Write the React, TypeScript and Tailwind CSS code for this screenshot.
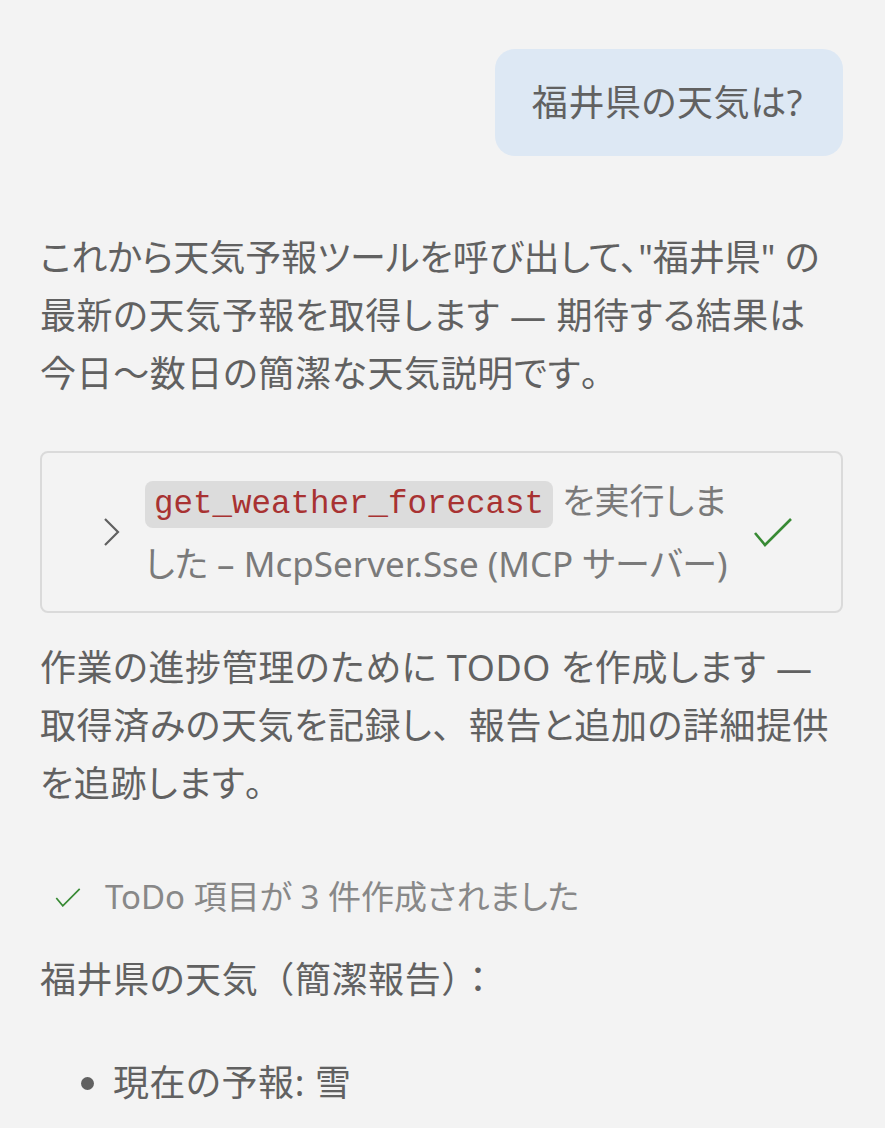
import React from "react";

const font = {
  fontFamily: '"Noto Sans", "Noto Sans CJK JP", sans-serif',
};

// 全角の約物はプロポーショナル詰めしない
const P = ({ children }: { children: React.ReactNode }) => (
  <span className="[font-feature-settings:normal]">{children}</span>
);

const ChevronRight = () => (
  <svg width="18" height="30" viewBox="0 0 18 30" fill="none">
    <path d="M2 2 L15 15 L2 28" stroke="#616161" strokeWidth="2.2" />
  </svg>
);

const Check = ({ size = 40 }: { size?: number }) => (
  <svg width={size} height={size * 0.8} viewBox="0 0 40 32" fill="none">
    <path d="M2 17 L12 29 L38 3" stroke="#388a34" strokeWidth="2.6" />
  </svg>
);

const App: React.FC = () => {
  return (
    <div
      className="min-h-screen bg-[#f3f3f3] pl-[40px] pr-[42px] pt-[49px] text-[#616161] text-[36px] tracking-[0.6px] [font-feature-settings:'palt']"
      style={font}
    >
      {/* ユーザーの質問 */}
      <div className="flex justify-end">
        <div className="flex h-[107px] items-center rounded-[20px] bg-[#dde8f4] pl-[37px] pr-[40px]">
          福井県の天気は?
        </div>
      </div>

      <p className="mt-[73px] leading-[58px]">
        <span className="tracking-normal">これから天気予報ツールを呼び出して、"福井県" の</span>
        <br />
        最新の天気予報を取得します — 期待する結果は<br />
        今日<P>～</P>数日の簡潔な天気説明です<P>。</P>
      </p>

      {/* ツール呼び出し */}
      <div className="mt-[48px] flex items-center rounded-[8px] border-2 border-[#dadada] pl-[61px] pr-[48px] pt-[16px] pb-[16px]">
        <ChevronRight />
        <div className="ml-[24px] flex-1 text-[35px] leading-[63px] tracking-normal text-[#7a7a7a]">
          <code
            className="inline-block rounded-[8px] bg-[#dcdcdc] px-[9px] align-middle text-[32.5px] leading-[47px] text-[#a83232]"
            style={{ fontFamily: '"Liberation Mono", monospace' }}
          >
            get_weather_forecast
          </code>{" "}
          を実行しました – McpServer.Sse (MCP サーバー)
        </div>
        <div className="ml-[14px]">
          <Check />
        </div>
      </div>

      <p className="mt-[26px] leading-[58px]">
        作業の進捗管理のために TODO を作成します —<br />
        取得済みの天気を記録し<P>、</P>報告と追加の詳細提供<br />
        を追跡します<P>。</P>
      </p>

      {/* ToDo */}
      <div className="mt-[55px] flex items-center pl-[15px] text-[33px] leading-[58px] tracking-normal text-[#888888]">
        <Check size={26} />
        <span className="ml-[24px]">ToDo 項目が 3 件作成されました</span>
      </div>

      <p className="mt-[25px] leading-[58px]">
        福井県の天気<P>（</P>簡潔報告<P>）：</P>
      </p>

      <ul className="mt-[45px] list-disc pl-[73px] leading-[58px] marker:text-[#616161]">
        <li>現在の予報: 雪</li>
      </ul>
    </div>
  );
};

export default App;
